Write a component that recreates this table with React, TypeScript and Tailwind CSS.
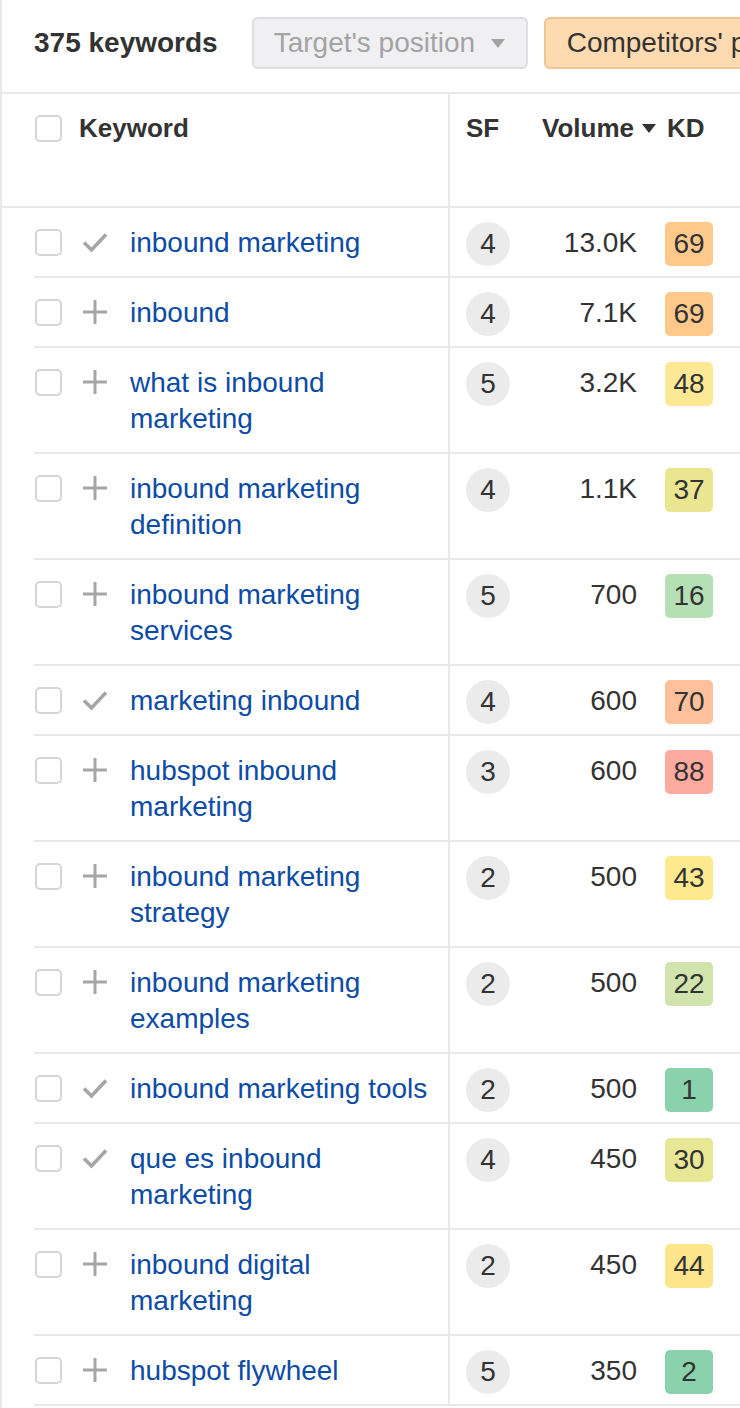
import React from "react";

type Row = {
  kw: string;
  added: boolean;
  sf: number;
  volume: string;
  kd: number;
  kdBg: string;
};

const rows: Row[] = [
  { kw: "inbound marketing", added: true, sf: 4, volume: "13.0K", kd: 69, kdBg: "bg-[#ffc98c]" },
  { kw: "inbound", added: false, sf: 4, volume: "7.1K", kd: 69, kdBg: "bg-[#ffc98c]" },
  { kw: "what is inbound marketing", added: false, sf: 5, volume: "3.2K", kd: 48, kdBg: "bg-[#fde995]" },
  { kw: "inbound marketing definition", added: false, sf: 4, volume: "1.1K", kd: 37, kdBg: "bg-[#e9e591]" },
  { kw: "inbound marketing services", added: false, sf: 5, volume: "700", kd: 16, kdBg: "bg-[#b5e0b6]" },
  { kw: "marketing inbound", added: true, sf: 4, volume: "600", kd: 70, kdBg: "bg-[#ffc09b]" },
  { kw: "hubspot inbound marketing", added: false, sf: 3, volume: "600", kd: 88, kdBg: "bg-[#ffaa9e]" },
  { kw: "inbound marketing strategy", added: false, sf: 2, volume: "500", kd: 43, kdBg: "bg-[#fee98f]" },
  { kw: "inbound marketing examples", added: false, sf: 2, volume: "500", kd: 22, kdBg: "bg-[#d2e4ad]" },
  { kw: "inbound marketing tools", added: true, sf: 2, volume: "500", kd: 1, kdBg: "bg-[#8ad2ab]" },
  { kw: "que es inbound marketing", added: true, sf: 4, volume: "450", kd: 30, kdBg: "bg-[#e8e795]" },
  { kw: "inbound digital marketing", added: false, sf: 2, volume: "450", kd: 44, kdBg: "bg-[#fde58c]" },
  { kw: "hubspot flywheel", added: false, sf: 5, volume: "350", kd: 2, kdBg: "bg-[#8ad2ab]" },
];

function Checkbox() {
  return <div className="mt-[5px] h-[27px] w-[27px] shrink-0 rounded-[5px] border-2 border-[#d6d6da] bg-white" />;
}

function CheckIcon() {
  return (
    <svg width="28" height="28" viewBox="0 0 28 28" className="mt-[4px] shrink-0">
      <path d="M3 14.5 L10.5 22 L25 6.5" fill="none" stroke="#a6a6a6" strokeWidth="3.6" />
    </svg>
  );
}

function PlusIcon() {
  return (
    <svg width="28" height="28" viewBox="0 0 28 28" className="mt-[4px] shrink-0">
      <path d="M14 2 V26 M2 14 H26" fill="none" stroke="#a6a6a6" strokeWidth="3" />
    </svg>
  );
}

function Caret({ color }: { color: string }) {
  return (
    <svg width="14" height="9" viewBox="0 0 14 9" className="shrink-0">
      <path d="M0 0 H14 L7 9 Z" fill={color} />
    </svg>
  );
}

function KeywordRow({ r }: { r: Row }) {
  return (
    <div className="flex">
      <div className="w-[448px] shrink-0 border-r-2 border-[#e8e8ec]">
        <div className="ml-[32px] flex items-start border-b-2 border-[#e8e8ec] pt-[17px] pb-[15px] pl-[1px]">
          <div className="-mt-[1px]">
            <Checkbox />
          </div>
          <div className="ml-[19px] -mt-[1px]">{r.added ? <CheckIcon /> : <PlusIcon />}</div>
          <a className="ml-[21px] w-[300px] text-[28px] leading-[36px] text-[#0d4ca6]">{r.kw}</a>
        </div>
      </div>
      <div className="flex flex-1 items-start border-b-2 border-[#e8e8ec] pt-[14px] pl-[16px]">
        <div className="flex h-[44px] w-[44px] items-center justify-center rounded-full bg-[#ebebeb] text-[28px] text-[#333]">
          {r.sf}
        </div>
        <div className="w-[127px] pt-[3px] text-right text-[28px] leading-[36px] text-[#333]">{r.volume}</div>
        <div
          className={`ml-[28px] flex h-[44px] w-[48px] items-center justify-center rounded-[5px] text-[28px] text-[#333] ${r.kdBg}`}
        >
          {r.kd}
        </div>
      </div>
    </div>
  );
}

export default function App() {
  return (
    <div className="h-[1408px] w-[740px] overflow-hidden border-l-2 border-[#e8e8ec] bg-white font-['Liberation_Sans',Arial,sans-serif]">
      {/* top bar */}
      <div className="flex h-[94px] items-center overflow-hidden whitespace-nowrap border-b-2 border-[#e8e8ec] pl-[32px] pb-[6px]">
        <div className="text-[28px] font-bold text-[#333]">375 keywords</div>
        <div className="ml-[34px] flex h-[52px] w-[276px] shrink-0 items-center rounded-[6px] border-2 border-[#dedee2] bg-[#f0f0f3] pl-[20px] text-[28px] text-[#a3a3a3]">
          Target's position
          <span className="ml-[16px]">
            <Caret color="#a3a3a3" />
          </span>
        </div>
        <div className="ml-[16px] flex h-[52px] w-[197px] shrink-0 items-center overflow-hidden rounded-l-[6px] border-y-2 border-l-2 border-[#f1c493] bg-[#fedab0] pl-[21px] text-[28px] text-[#333]">
          Competitors' p
        </div>
      </div>

      {/* header */}
      <div className="flex h-[114px] border-b-2 border-[#e8e8ec]">
        <div className="flex w-[448px] shrink-0 items-start border-r-2 border-[#e8e8ec] pt-[16px] pl-[33px]">
          <Checkbox />
          <div className="ml-[17px] text-[26px] font-bold leading-[36px] text-[#333]">Keyword</div>
        </div>
        <div className="flex flex-1 items-start whitespace-nowrap pt-[16px] pl-[16px] text-[26px] font-bold leading-[36px] text-[#333]">
          <div className="w-[76px]">SF</div>
          <div className="flex items-center">
            Volume
            <span className="ml-[8px]">
              <Caret color="#333" />
            </span>
          </div>
          <div className="ml-[11px]">KD</div>
        </div>
      </div>

      {rows.map((r) => (
        <KeywordRow key={r.kw} r={r} />
      ))}
    </div>
  );
}
